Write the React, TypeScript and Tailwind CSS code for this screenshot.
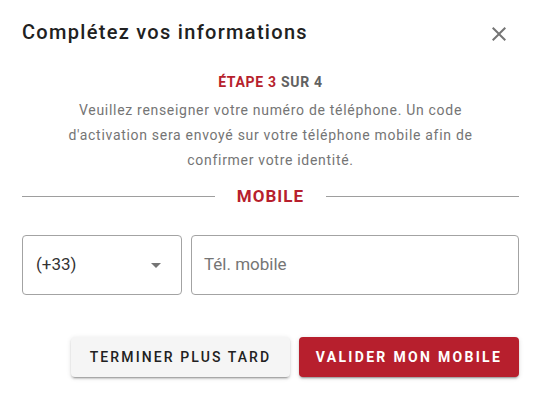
import React from 'react';

const RED = 'text-[#b71f2d]';

const CloseIcon: React.FC = () => (
  <svg width="24" height="24" viewBox="0 0 24 24" fill="#757575">
    <path d="M19 6.41 17.59 5 12 10.59 6.41 5 5 6.41 10.59 12 5 17.59 6.41 19 12 13.41 17.59 19 19 17.59 13.41 12z" />
  </svg>
);

const ArrowDropDown: React.FC = () => (
  <svg width="24" height="24" viewBox="0 0 24 24" fill="#757575">
    <path d="M7 10l5 5 5-5z" />
  </svg>
);

const App: React.FC = () => {
  return (
    <div className="w-[544px] h-[404px] bg-white font-['Roboto','Liberation_Sans',sans-serif] text-[#212121]">
      {/* header */}
      <div className="flex items-start justify-between pt-[14px] pl-[22px] pr-[25px]">
        <h2 className="mt-[2px] text-[20px] leading-[32px] font-medium tracking-[0.065em]">Complétez vos informations</h2>
        <button className="w-10 h-10 flex items-center justify-center rounded-full">
          <CloseIcon />
        </button>
      </div>

      <div className="pl-[22px] pr-[25px]">
        <p className="mt-[18px] text-center text-[14px] leading-[20px] font-bold tracking-[0.05em]">
          <span className={RED}>ÉTAPE 3</span> <span className="text-[#616161]">SUR 4</span>
        </p>
        <p className="mt-[6px] text-center text-[14px] leading-[25px] tracking-[0.05em] text-[#757575]">
          Veuillez renseigner votre numéro de téléphone. Un code
          <br />
          d'activation sera envoyé sur votre téléphone mobile afin de
          <br />
          confirmer votre identité.
        </p>

        {/* divider */}
        <div className="mt-[9px] h-[28px] flex items-center">
          <div className="flex-1 h-px bg-[#9e9e9e]" />
          <span className={`px-[22px] text-[17px] leading-[28px] font-bold tracking-[0.06em] ${RED}`}>MOBILE</span>
          <div className="flex-1 h-px bg-[#9e9e9e]" />
        </div>

        {/* phone fields */}
        <div className="mt-[25px] flex gap-[9px]">
          <div className="w-[160px] h-[60px] border border-[#a3a3a3] rounded-[4px] flex items-center justify-between pl-[13px] pr-[13px]">
            <span className="text-[17px] text-[#333]">(+33)</span>
            <ArrowDropDown />
          </div>
          <div className="flex-1 h-[60px] border border-[#a3a3a3] rounded-[4px] flex items-center pl-[12px]">
            <span className="text-[17px] text-[#757575]">Tél. mobile</span>
          </div>
        </div>

        {/* actions */}
        <div className="mt-[42px] flex justify-end gap-[9px]">
          <button className="w-[219px] h-[40px] rounded-[4px] bg-[#f5f5f5] text-[14px] font-medium tracking-[0.15em] text-[#212121] shadow-[0_3px_1px_-2px_rgba(0,0,0,0.2),0_2px_2px_0_rgba(0,0,0,0.14),0_1px_5px_0_rgba(0,0,0,0.12)]">
            TERMINER PLUS TARD
          </button>
          <button className="w-[220px] h-[40px] rounded-[4px] bg-[#b71f2d] text-[14px] font-bold tracking-[0.165em] text-white shadow-[0_3px_1px_-2px_rgba(0,0,0,0.2),0_2px_2px_0_rgba(0,0,0,0.14),0_1px_5px_0_rgba(0,0,0,0.12)]">
            VALIDER MON MOBILE
          </button>
        </div>
      </div>
    </div>
  );
};

export default App;
